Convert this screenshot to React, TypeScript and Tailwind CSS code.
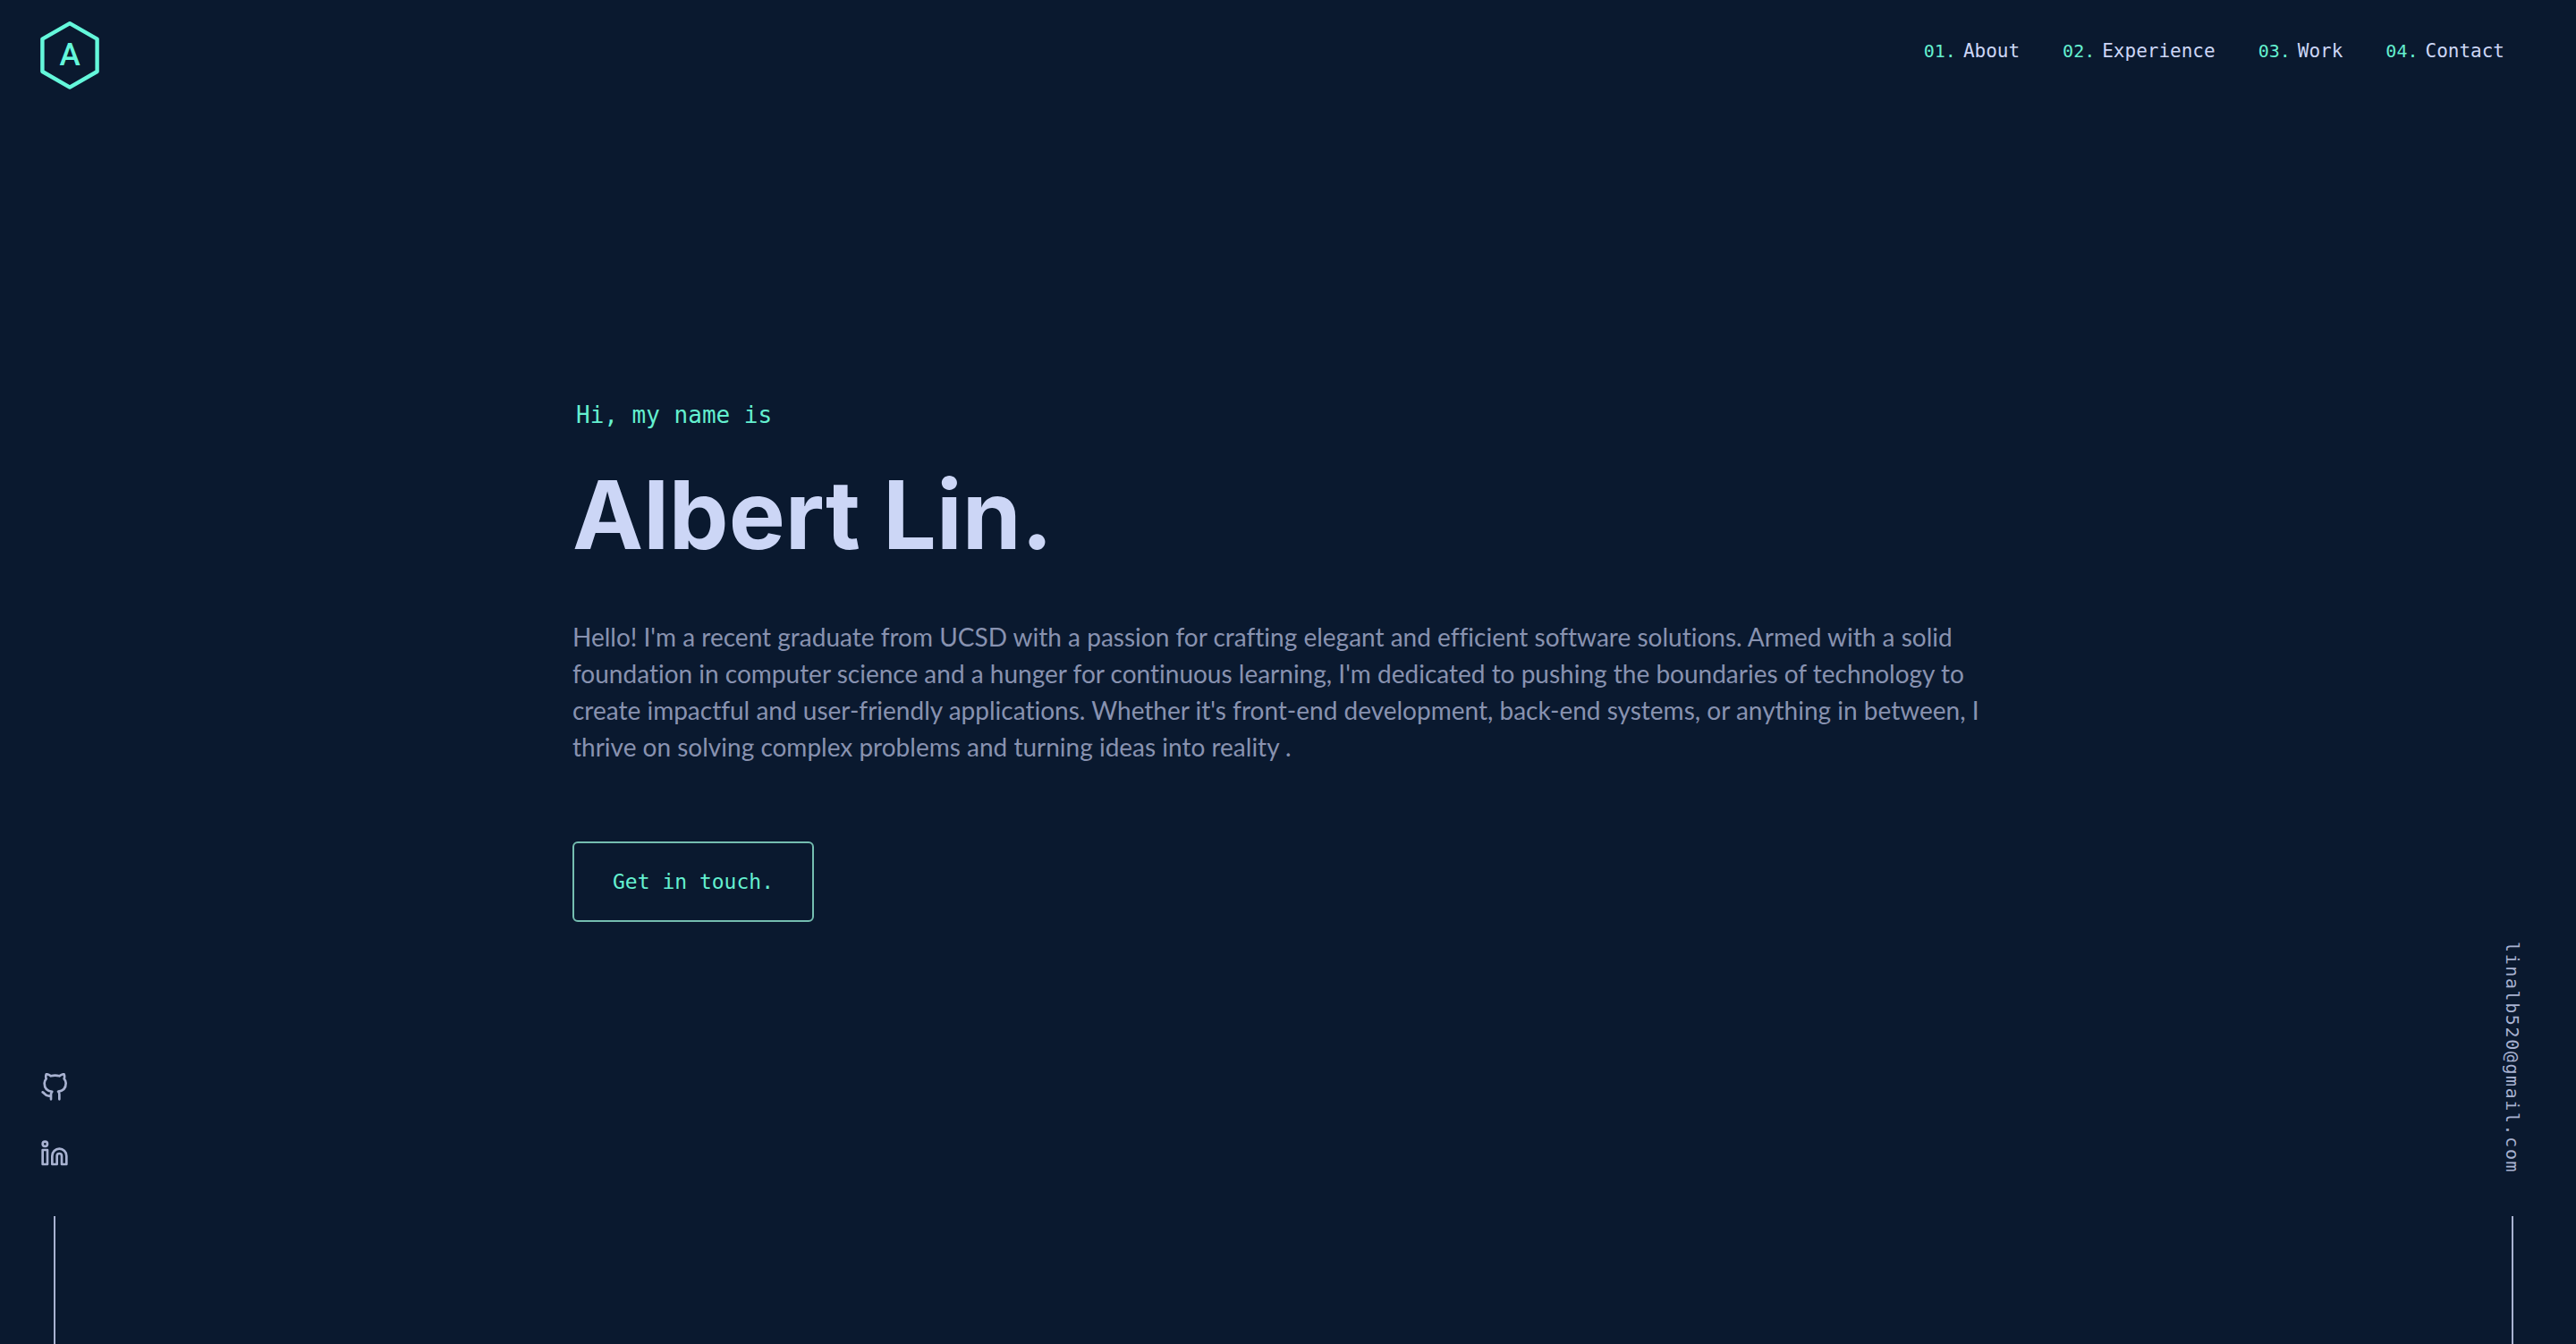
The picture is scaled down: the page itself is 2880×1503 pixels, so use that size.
const navItems = [
  { number: "01.", label: "About", href: "#about" },
  { number: "02.", label: "Experience", href: "#experience" },
  { number: "03.", label: "Work", href: "#work" },
  { number: "04.", label: "Contact", href: "#contact" },
];

function Logo() {
  return (
    <svg viewBox="0 0 66 76" className="h-[76px] w-[66px]" fill="none" aria-hidden="true">
      <path d="M33 2.2 63.6 19.6v36.4L33 73.6 2.4 56V19.6Z" stroke="#64f7db" strokeWidth="4.4" strokeLinejoin="round" />
      <text x="33" y="49" textAnchor="middle" className="fill-[#64f7db] font-['Roboto',sans-serif] text-[35px] font-medium">
        A
      </text>
    </svg>
  );
}

function GithubIcon() {
  return (
    <svg viewBox="0 0 24 24" className="size-8" fill="none" stroke="currentColor" strokeWidth="2" strokeLinecap="round" strokeLinejoin="round" aria-hidden="true">
      <path d="M9 19c-5 1.5-5-2.5-7-3m14 6v-3.87a3.37 3.37 0 0 0-.94-2.61c3.14-.35 6.44-1.54 6.44-7A5.44 5.44 0 0 0 20 4.77 5.07 5.07 0 0 0 19.91 1S18.73.65 16 2.48a13.38 13.38 0 0 0-7 0C6.27.65 5.09 1 5.09 1A5.07 5.07 0 0 0 5 4.77a5.44 5.44 0 0 0-1.5 3.78c0 5.42 3.3 6.61 6.44 7A3.37 3.37 0 0 0 9 18.13V22" />
    </svg>
  );
}

function LinkedinIcon() {
  return (
    <svg viewBox="0 0 24 24" className="size-8" fill="none" stroke="currentColor" strokeWidth="2" strokeLinecap="round" strokeLinejoin="round" aria-hidden="true">
      <path d="M16 8a6 6 0 0 1 6 6v7h-4v-7a2 2 0 0 0-2-2 2 2 0 0 0-2 2v7h-4v-7a6 6 0 0 1 6-6z" />
      <rect x="2" y="9" width="4" height="12" />
      <circle cx="4" cy="4" r="2" />
    </svg>
  );
}

export default function App() {
  return (
    <div className="flex min-h-screen flex-col bg-[#0a192f] font-['DejaVu_Sans_Mono',monospace] text-[#a8b2d1]">
      <header className="flex items-start justify-between pt-6 pr-20 pl-[45px]">
        <a href="#top" aria-label="Home">
          <Logo />
        </a>
        <nav className="pt-[17px]" aria-label="Main">
          <ol className="flex gap-12">
            {navItems.map((item) => (
              <li key={item.label}>
                <a href={item.href} className="flex items-baseline gap-2 text-[21px] leading-8 text-[#ccd6f6]">
                  <span className="text-[20px] text-[#64f0d0]">{item.number}</span>
                  {item.label}
                </a>
              </li>
            ))}
          </ol>
        </nav>
      </header>

      <div className="flex flex-1">
        <aside className="flex w-[142px] shrink-0 flex-col justify-end pl-[45px]">
          <div className="flex w-8 flex-col items-center">
            <a href="#github" aria-label="GitHub">
              <GithubIcon />
            </a>
            <a href="#linkedin" aria-label="LinkedIn" className="mt-[42px]">
              <LinkedinIcon />
            </a>
            <div className="mt-[54px] h-[143px] w-[2px] bg-[#a8b2d1]" />
          </div>
        </aside>

        <main className="flex-1 pt-[344px]">
          <div className="mx-auto max-w-[1600px]">
            <p className="pl-1 text-[26px] leading-10 text-[#64f0d0]">Hi, my name is</p>
            <h1 className="mt-8 font-['Inter',sans-serif] text-[106px] leading-[120px] font-bold text-[#ccd6f6]">
              Albert Lin.
            </h1>
            <p className="mt-14 font-['Lato',sans-serif] text-[28px] leading-[41px] text-[#8892b0] [font-variant-ligatures:none]">
              Hello! I'm a recent graduate from UCSD with a passion for crafting elegant and efficient software
              solutions. Armed with a solid foundation in computer science and a hunger for continuous learning, I'm
              dedicated to pushing the boundaries of technology to create impactful and user-friendly applications.
              Whether it's front-end development, back-end systems, or anything in between, I thrive on solving complex
              problems and turning ideas into reality .
            </p>
            <button
              type="button"
              className="mt-[85px] rounded-md border-2 border-[#74bdb0] px-[43px] py-[27px] text-[23px] leading-8 text-[#64f0d0]"
            >
              Get in touch.
            </button>
          </div>
        </main>

        <aside className="flex w-[142px] shrink-0 flex-col items-center justify-end">
          <a href="mailto:linalb520@gmail.com" className="text-[20px] leading-8 tracking-[0.08em] [writing-mode:vertical-rl]">
            linalb520@gmail.com
          </a>
          <div className="mt-12 h-[143px] w-[2px] bg-[#a8b2d1]" />
        </aside>
      </div>
    </div>
  );
}
